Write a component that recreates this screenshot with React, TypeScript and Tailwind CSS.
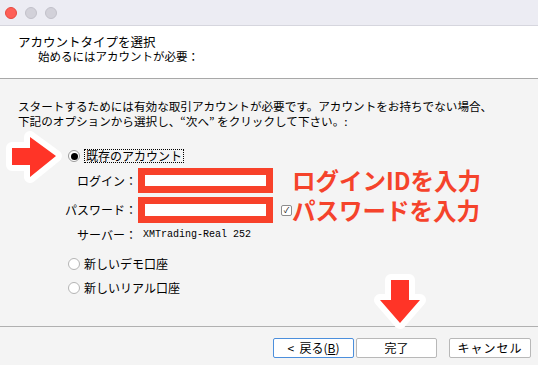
import React from "react";

const jp = "font-['Noto_Sans_CJK_JP',sans-serif]";

function Radio({ checked }: { checked?: boolean }) {
  return (
    <span
      className={
        "w-[12px] h-[12px] rounded-full border flex items-center justify-center shrink-0 " +
        (checked ? "border-[#9a9a9a] bg-white" : "border-[#b4b4b4] bg-white")
      }
    >
      {checked && <span className="w-[7px] h-[7px] rounded-full bg-black" />}
    </span>
  );
}

export default function App() {
  return (
    <div className={`relative w-[538px] h-[365px] overflow-hidden bg-[#f4f4f4] flex flex-col text-black ${jp}`}>
      {/* title bar */}
      <div className="h-[26px] bg-[#ececf3] border-b border-[#d6d6de] flex items-center gap-[8px] pl-[5px]">
        <span className="w-[12px] h-[12px] rounded-full bg-[#fe5f57] border border-[#e5493f]" />
        <span className="w-[12px] h-[12px] rounded-full bg-[#d2d1d9] border border-[#c2c1ca]" />
        <span className="w-[12px] h-[12px] rounded-full bg-[#d2d1d9] border border-[#c2c1ca]" />
      </div>

      {/* header */}
      <div className="h-[53px] bg-white border-b border-[#a8a8a8] pl-[18px] pt-[9px]">
        <p className="text-[12.5px] leading-[14px]">アカウントタイプを選択</p>
        <p className="text-[11.5px] leading-[14px] ml-[20px]">始めるにはアカウントが必要：</p>
      </div>

      {/* body */}
      <div className="flex-1 pl-[18px] pt-[20px]">
        <p className="text-[11.6px] leading-[15px] whitespace-nowrap">
          スタートするためには有効な取引アカウントが必要です。アカウントをお持ちでない場合、
        </p>
        <p className="text-[11.6px] leading-[15px] whitespace-nowrap">
          下記のオプションから選択し、“次へ” をクリックして下さい。:
        </p>

        <div className="mt-[19px] ml-[50px] h-[16px] flex items-center gap-[4px]">
          <Radio checked />
          <span className="text-[12px] leading-[12px] border border-dotted border-black px-[1px]">
            既存のアカウント
          </span>
        </div>

        <div className="mt-[4px] flex items-center h-[25px]">
          <span className="w-[119px] text-right text-[12px] leading-none">ログイン：</span>
          <div className="ml-[1px] w-[135px] h-[25px] border-[7px] border-[#f8412a] bg-white" />
          <span className="ml-[19px] text-[23.5px] leading-[23px] font-bold text-[#f5432b] whitespace-nowrap">
            ログインIDを入力
          </span>
        </div>

        <div className="mt-[4px] flex items-center h-[26px]">
          <span className="w-[119px] text-right text-[12px] leading-none">パスワード：</span>
          <div className="ml-[1px] w-[135px] h-[26px] border-[7px] border-[#f8412a] bg-white" />
          <span className="ml-[8px] w-[11px] h-[11px] border border-[#8c8c8c] rounded-[2px] bg-white flex items-center justify-center text-[8px] leading-none">
            ✓
          </span>
          <span className="text-[23.5px] leading-[23px] font-bold text-[#f5432b] whitespace-nowrap">
            パスワードを入力
          </span>
        </div>

        <div className="mt-[5px] flex items-center h-[14px]">
          <span className="w-[119px] text-right text-[12px] leading-none">サーバー：</span>
          <span className="ml-[6px] font-['Liberation_Mono',monospace] text-[10px] leading-none">
            XMTrading-Real 252
          </span>
        </div>

        <div className="mt-[14px] ml-[50px] h-[16px] flex items-center gap-[4px]">
          <Radio />
          <span className="text-[12px] leading-[12px]">新しいデモ口座</span>
        </div>
        <div className="mt-[8px] ml-[50px] h-[16px] flex items-center gap-[4px]">
          <Radio />
          <span className="text-[12px] leading-[12px]">新しいリアル口座</span>
        </div>
      </div>

      {/* footer */}
      <div className="h-[39px] border-t border-[#b0b0b0] flex justify-end items-start pt-[11px] pr-[7px]">
        <button className="w-[81px] h-[20px] bg-white border border-[#4c8fdc] rounded-[2px] text-[12px] leading-none">
          {"<\u00a0\u00a0戻る("}
          <u>B</u>)
        </button>
        <button className="ml-[2px] w-[81px] h-[20px] bg-white border border-[#b8b8b8] rounded-[2px] text-[12px] leading-none">
          完了
        </button>
        <button className="ml-[12px] w-[82px] h-[20px] bg-white border border-[#b8b8b8] rounded-[2px] text-[12px] leading-none tracking-[1px]">
          キャンセル
        </button>
      </div>

      {/* annotation arrows */}
      <svg className="absolute left-0 top-[125px]" width="70" height="65" viewBox="0 0 70 65">
        <polygon
          points="12,23 30,23 30,12 56,31 30,52 30,40 12,40"
          fill="white"
          stroke="white"
          strokeWidth="12"
          strokeLinejoin="round"
        />
        <polygon points="12,23 30,23 30,12 56,31 30,52 30,40 12,40" fill="#ff3427" />
      </svg>
      <svg className="absolute left-[370px] top-[266px]" width="62" height="68" viewBox="0 0 62 68">
        <polygon
          points="21,14 39,14 39,34 50,34 30,57 10,34 21,34"
          fill="white"
          stroke="white"
          strokeWidth="12"
          strokeLinejoin="round"
        />
        <polygon points="21,14 39,14 39,34 50,34 30,57 10,34 21,34" fill="#ff3427" />
      </svg>
    </div>
  );
}
